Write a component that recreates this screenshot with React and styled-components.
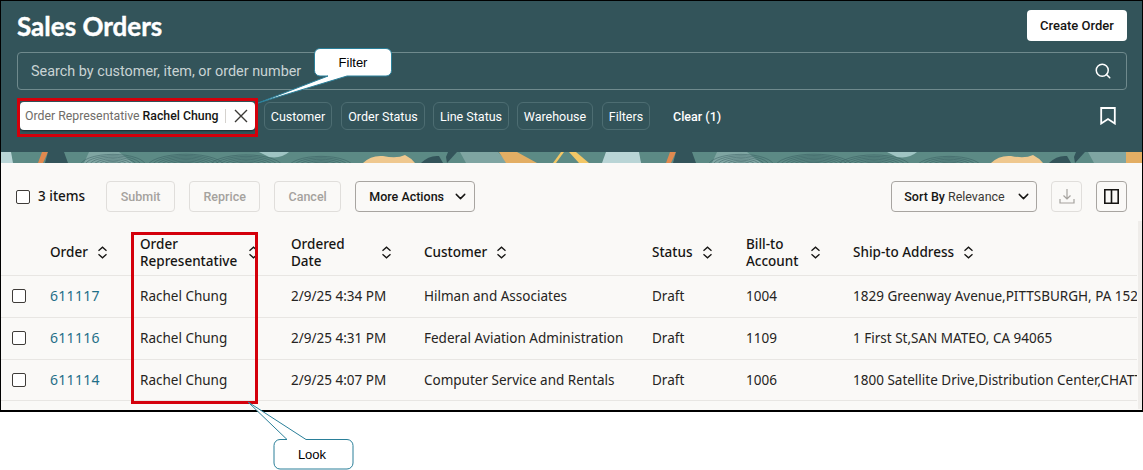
import React from "react";
import styled, { createGlobalStyle } from "styled-components";
import { Search, ChevronDown } from "lucide-react";

const Global = createGlobalStyle`
  html, body { margin: 0; padding: 0; background: #fff; }
  body { font-family: "Noto Sans", "Open Sans", sans-serif; }
  * { box-sizing: border-box; }
`;

const Page = styled.div`
  position: relative;
  width: 1143px;
  height: 470px;
  background: #fff;
  overflow: hidden;
`;
const Frame = styled.div`
  width: 1143px;
  height: 412px;
  border: 1px solid #000;
  border-bottom-width: 2px;
  background: #faf9f7;
  overflow: hidden;
`;
const Header = styled.header`
  height: 151px;
  background: #33545a;
  padding: 9px 15px 0 16px;
  display: flex;
  flex-direction: column;
`;
const TitleRow = styled.div`
  display: flex;
  justify-content: space-between;
  align-items: flex-start;
  height: 42px;
`;
const Title = styled.h1`
  margin: 0;
  font: 700 26px/32px Lato, "Noto Sans", sans-serif;
  -webkit-text-stroke: 0.4px #fff;
  color: #fff;
`;
const CreateButton = styled.button`
  width: 100px;
  height: 31px;
  background: #fff;
  border: 0;
  border-radius: 4px;
  font: 500 13px Roboto, sans-serif;
  color: #161513;
`;
const SearchBar = styled.div`
  height: 38px;
  border: 1px solid #6f8a8d;
  border-radius: 4px;
  display: flex;
  align-items: center;
  justify-content: space-between;
  padding: 0 14px 0 13px;
  color: #fff;
`;
const Placeholder = styled.span`
  font: 400 14.4px Roboto, sans-serif;
  color: #c9d3d4;
`;
const FilterRow = styled.div`
  margin-top: 12px;
  display: flex;
  align-items: center;
  height: 28px;
  padding-left: 3px;
  color: #fff;
`;
const ActiveChip = styled.div`
  width: 235px;
  height: 28px;
  flex: none;
  background: #fff;
  border-radius: 4px;
  box-shadow: 0 1px 2px rgba(0, 0, 0, 0.5);
  display: flex;
  align-items: center;
  padding-left: 5px;
  font: 400 12.3px Roboto, sans-serif;
  white-space: nowrap;
  margin-right: 9px;
  color: #6f6c68;
`;
const ChipValue = styled.b`
  font-weight: 500;
  color: #161513;
  margin-left: 3px;
`;
const ChipDivider = styled.span`
  width: 1px;
  height: 14px;
  background: #d5d2ce;
  margin: 0 8px 0 7px;
`;
const Chip = styled.button`
  height: 28px;
  padding: 0;
  width: ${(p) => p.$w}px;
  margin-right: ${(p) => p.$mr ?? 8}px;
  background: transparent;
  border: 1px solid #4d6d72;
  border-radius: 6px;
  color: #fff;
  font: 400 12.5px Roboto, sans-serif;
  white-space: nowrap;
`;
const ClearLink = styled.span`
  font: 500 12.5px Roboto, sans-serif;
  margin-left: 15px;
`;
const BookmarkSlot = styled.span`
  margin-left: auto;
  margin-right: 11px;
  display: flex;
`;
const Band = styled.svg`
  display: block;
  width: 1141px;
  height: 11px;
`;
const Toolbar = styled.div`
  height: 69px;
  padding: 18px 15px 0 15px;
  display: flex;
  align-items: flex-start;
`;
const Check = styled.span`
  width: 14px;
  height: 14px;
  flex: none;
  border: 1.5px solid #3f3c39;
  border-radius: 2px;
  background: #fff;
  display: block;
`;
const Count = styled.span`
  font-size: 13.5px;
  font-weight: 500;
  color: #161513;
  margin: 0 21px 0 8px;
  line-height: 31px;
`;
const ToolbarCheck = styled.span`
  height: 32px;
  display: flex;
  align-items: center;
`;
const ToolButton = styled.button`
  height: 31px;
  width: ${(p) => p.$w}px;
  margin-right: ${(p) => p.$mr ?? 14}px;
  background: transparent;
  border: 1px solid ${(p) => (p.$off ? "#e0dedb" : "#a8a5a1")};
  border-radius: 4px;
  color: ${(p) => (p.$off ? "#a5a29e" : "#161513")};
  font: 500 12.5px Roboto, sans-serif;
  display: flex;
  align-items: center;
  justify-content: center;
  gap: 8px;
  padding: 0 0 0 ${(p) => (p.$menu ? 8 : 0)}px;
  white-space: nowrap;
`;
const Relevance = styled.span`
  font-weight: 400;
  margin-left: -5px;
  margin-right: 2px;
  color: #3b3936;
`;
const Spacer = styled.span`
  flex: 1;
`;
const TableWrap = styled.div`
  position: relative;
  width: 1136px;
  overflow: hidden;
`;
const Row = styled.div`
  display: grid;
  grid-template-columns: 49px 90px 151px 133px 228px 94px 107px 284px;
  width: 1136px;
  height: ${(p) => p.$h}px;
  padding-bottom: 2px;
  border-bottom: 1px solid #e8e6e3;
  align-items: center;
  &:last-child {
    height: 41px;
    padding-bottom: 1px;
  }
`;
const HeadCell = styled.div`
  display: flex;
  align-items: center;
  padding-right: 32px;
  font-size: 13.5px;
  font-weight: 500;
  line-height: 17px;
  color: #161513;
`;
const HeadLabel = styled.span`
  flex: ${(p) => (p.$fill ? 1 : "none")};
  margin-right: 9px;
`;
const Cell = styled.div`
  font-size: 13.5px;
  color: #262422;
  white-space: nowrap;
  overflow: ${(p) => (p.$clip ? "hidden" : "visible")};
`;
const RowCheck = styled.div`
  padding-left: 11px;
`;
const OrderLink = styled.a`
  color: #1f6f88;
  font-size: 14px;
  letter-spacing: 0.3px;
`;
const ScrollTrack = styled.div`
  position: absolute;
  right: 1px;
  top: 221px;
  width: 4px;
  height: 188px;
  background: #efedea;
`;
const Highlight = styled.div`
  position: absolute;
  left: ${(p) => p.$x}px;
  top: ${(p) => p.$y}px;
  width: ${(p) => p.$w}px;
  height: ${(p) => p.$h}px;
  border: 3px solid #d4000b;
  pointer-events: none;
`;
const CalloutArt = styled.svg`
  position: absolute;
  left: 0;
  top: 0;
`;
const CalloutText = styled.span`
  position: absolute;
  left: ${(p) => p.$x}px;
  top: ${(p) => p.$y}px;
  width: ${(p) => p.$w}px;
  text-align: center;
  font: 13px "Liberation Sans", Arial, sans-serif;
  color: #000;
`;

const SortIcon = () => (
  <svg width="11" height="13" viewBox="0 0 11 13" fill="none" stroke="#161513" strokeWidth="1.3">
    <path d="M1.500 4.800 5.500 1.200l4 3.600M1.500 8.200l4 3.600 4-3.600" />
  </svg>
);

const rings = (cx, cy, n, step) =>
  Array.from({ length: n }, (_, i) => (
    <ellipse key={i} cx={cx} cy={cy} rx={6 + i * step * 2.8} ry={3 + i * step * 0.9} />
  ));

const Pattern = ({ dx }) => (
  <g transform={`translate(${dx} 0)`}>
    <path d="M-1 0H10L12 11H-1Z" fill="#b9d5d6" />
    <path d="M41 0H47L42 11H37Z" fill="#e0894f" />
    <path d="M47 0H63L67 11H44Z" fill="#33545a" />
    <path d="M88 0H118L132 11H83Z" fill="#7fa5a2" />
    <g fill="none" stroke="#2f5257" strokeWidth=".6" opacity=".7">
      {rings(112, 14, 7, 1.6)}
      {rings(185, 16, 9, 1.5)}
      {rings(245, 16, 8, 1.6)}
      {rings(320, 16, 7, 1.6)}
    </g>
    <path d="M258 0H288Q280 7 268 5Z" fill="#9fc4c3" />
    <path d="M362 11Q370 3 382 4Q396 7 404 3Q410 6 414 11Z" fill="#efc88f" />
    <path d="M420 11Q428 3 438 4L442 11Z" fill="#33545a" />
    <path d="M446 11L456 0H447L445 5Z" fill="#33545a" />
    <path d="M459 0H497L507 11H465Z" fill="#7fa5a2" />
    <path d="M498 0H516L536 11H505Z" fill="#e3ae64" />
    <path d="M560 0H563L555 11H552Z" fill="#f3c766" />
    <path d="M568 0H575L588 11H578Z" fill="#f3c766" />
    <path d="M605 0H635L640 11H601Z" fill="#b9d5d6" />
  </g>
);

const columns = [
  ["Order"],
  ["Order Representative", true],
  ["Ordered Date", true],
  ["Customer"],
  ["Status"],
  ["Bill-to Account", true],
  ["Ship-to Address"],
];

const orders = [
  ["611117", "2/9/25 4:34 PM", "Hilman and Associates", "1004", "1829 Greenway Avenue,PITTSBURGH, PA 15219"],
  ["611116", "2/9/25 4:31 PM", "Federal Aviation Administration", "1109", "1 First St,SAN MATEO, CA 94065"],
  ["611114", "2/9/25 4:07 PM", "Computer Service and Rentals", "1006", "1800 Satellite Drive,Distribution Center,CHATTANOOGA, TN"],
];

export default function App() {
  return (
    <Page>
      <Global />
      <Frame>
        <Header>
          <TitleRow>
            <Title>Sales Orders</Title>
            <CreateButton>Create Order</CreateButton>
          </TitleRow>
          <SearchBar>
            <Placeholder>Search by customer, item, or order number</Placeholder>
            <Search size={18} strokeWidth={2} />
          </SearchBar>
          <FilterRow>
            <ActiveChip>
              Order Representative<ChipValue>Rachel Chung</ChipValue>
              <ChipDivider />
              <svg width="14" height="14" viewBox="0 0 14 14" fill="none" stroke="#3b3936" strokeWidth="1.4">
                <path d="M1 1l12 12M13 1 1 13" />
              </svg>
            </ActiveChip>
            <Chip $w={68} $mr={9}>Customer</Chip>
            <Chip $w={84}>Order Status</Chip>
            <Chip $w={76}>Line Status</Chip>
            <Chip $w={76} $mr={9}>Warehouse</Chip>
            <Chip $w={48}>Filters</Chip>
            <ClearLink>Clear (1)</ClearLink>
            <BookmarkSlot>
              <svg width="16" height="18" viewBox="0 0 16 18" fill="none" stroke="#fff" strokeWidth="1.8">
                <path d="M1.200 1h13.600v15.500L8 12 1.200 16.500Z" />
              </svg>
            </BookmarkSlot>
          </FilterRow>
        </Header>
        <Band viewBox="0 0 1141 11" preserveAspectRatio="none">
          <rect width="1141" height="11" fill="#5c8a85" />
          <Pattern dx={0} />
          <Pattern dx={628} />
          <rect x="1125" width="16" height="11" fill="#e3ae64" />
        </Band>
        <Toolbar>
          <ToolbarCheck>
            <Check />
          </ToolbarCheck>
          <Count>3 items</Count>
          <ToolButton $off $w={69}>Submit</ToolButton>
          <ToolButton $off $w={71}>Reprice</ToolButton>
          <ToolButton $off $w={67}>Cancel</ToolButton>
          <ToolButton $menu $w={120}>
            More Actions <ChevronDown size={17} strokeWidth={2} />
          </ToolButton>
          <Spacer />
          <ToolButton $menu $w={146}>
            Sort By <Relevance>Relevance</Relevance> <ChevronDown size={17} strokeWidth={2} />
          </ToolButton>
          <ToolButton $off $w={31}>
            <svg width="16" height="17" viewBox="0 0 16 17" fill="none" stroke="#a5a29e" strokeWidth="1.2">
              <path d="M8 1v10M4.500 7.500 8 11l3.500-3.500M1 11v4h14v-4" />
            </svg>
          </ToolButton>
          <ToolButton $w={31} $mr={0}>
            <svg width="15" height="15" viewBox="0 0 15 15" fill="none" stroke="#161513" strokeWidth="1.6">
              <path d="M.8.8h13.400v13.400H.8zM7.500.8v13.400" />
            </svg>
          </ToolButton>
        </Toolbar>
        <TableWrap>
          <Row $h={44}>
            <span />
            {columns.map(([label, wrap]) => (
              <HeadCell key={label}>
                <HeadLabel $fill={wrap}>{label}</HeadLabel>
                <SortIcon />
              </HeadCell>
            ))}
          </Row>
          {orders.map((o) => (
            <Row $h={42} key={o[0]}>
              <RowCheck>
                <Check />
              </RowCheck>
              <Cell>
                <OrderLink>{o[0]}</OrderLink>
              </Cell>
              <Cell>Rachel Chung</Cell>
              <Cell>{o[1]}</Cell>
              <Cell>{o[2]}</Cell>
              <Cell>Draft</Cell>
              <Cell>{o[3]}</Cell>
              <Cell $clip>{o[4]}</Cell>
            </Row>
          ))}
        </TableWrap>
      </Frame>
      <ScrollTrack />
      <Highlight $x={17} $y={98} $w={241} $h={39} />
      <Highlight $x={131} $y={232} $w={127} $h={172} />
      <CalloutArt width="1143" height="470" viewBox="0 0 1143 470">
        <path
          d="M320 48.500H386a5.500 5.500 0 0 1 5.500 5.500V70.500a5.500 5.500 0 0 1-5.500 5.500H347L258 103 328 76H320a5.500 5.500 0 0 1-5.500-5.500V54a5.500 5.500 0 0 1 5.500-5.500Z"
          fill="#fff"
          stroke="#2a7f99"
        />
        <path
          d="M280 439.500H287L248 402 306 439.500H347a6 6 0 0 1 6 6V463a6 6 0 0 1-6 6H280a6 6 0 0 1-6-6V445.500a6 6 0 0 1 6-6Z"
          fill="#fff"
          stroke="#2a7f99"
        />
      </CalloutArt>
      <CalloutText $x={314} $y={55} $w={78}>Filter</CalloutText>
      <CalloutText $x={272} $y={447} $w={80}>Look</CalloutText>
    </Page>
  );
}
